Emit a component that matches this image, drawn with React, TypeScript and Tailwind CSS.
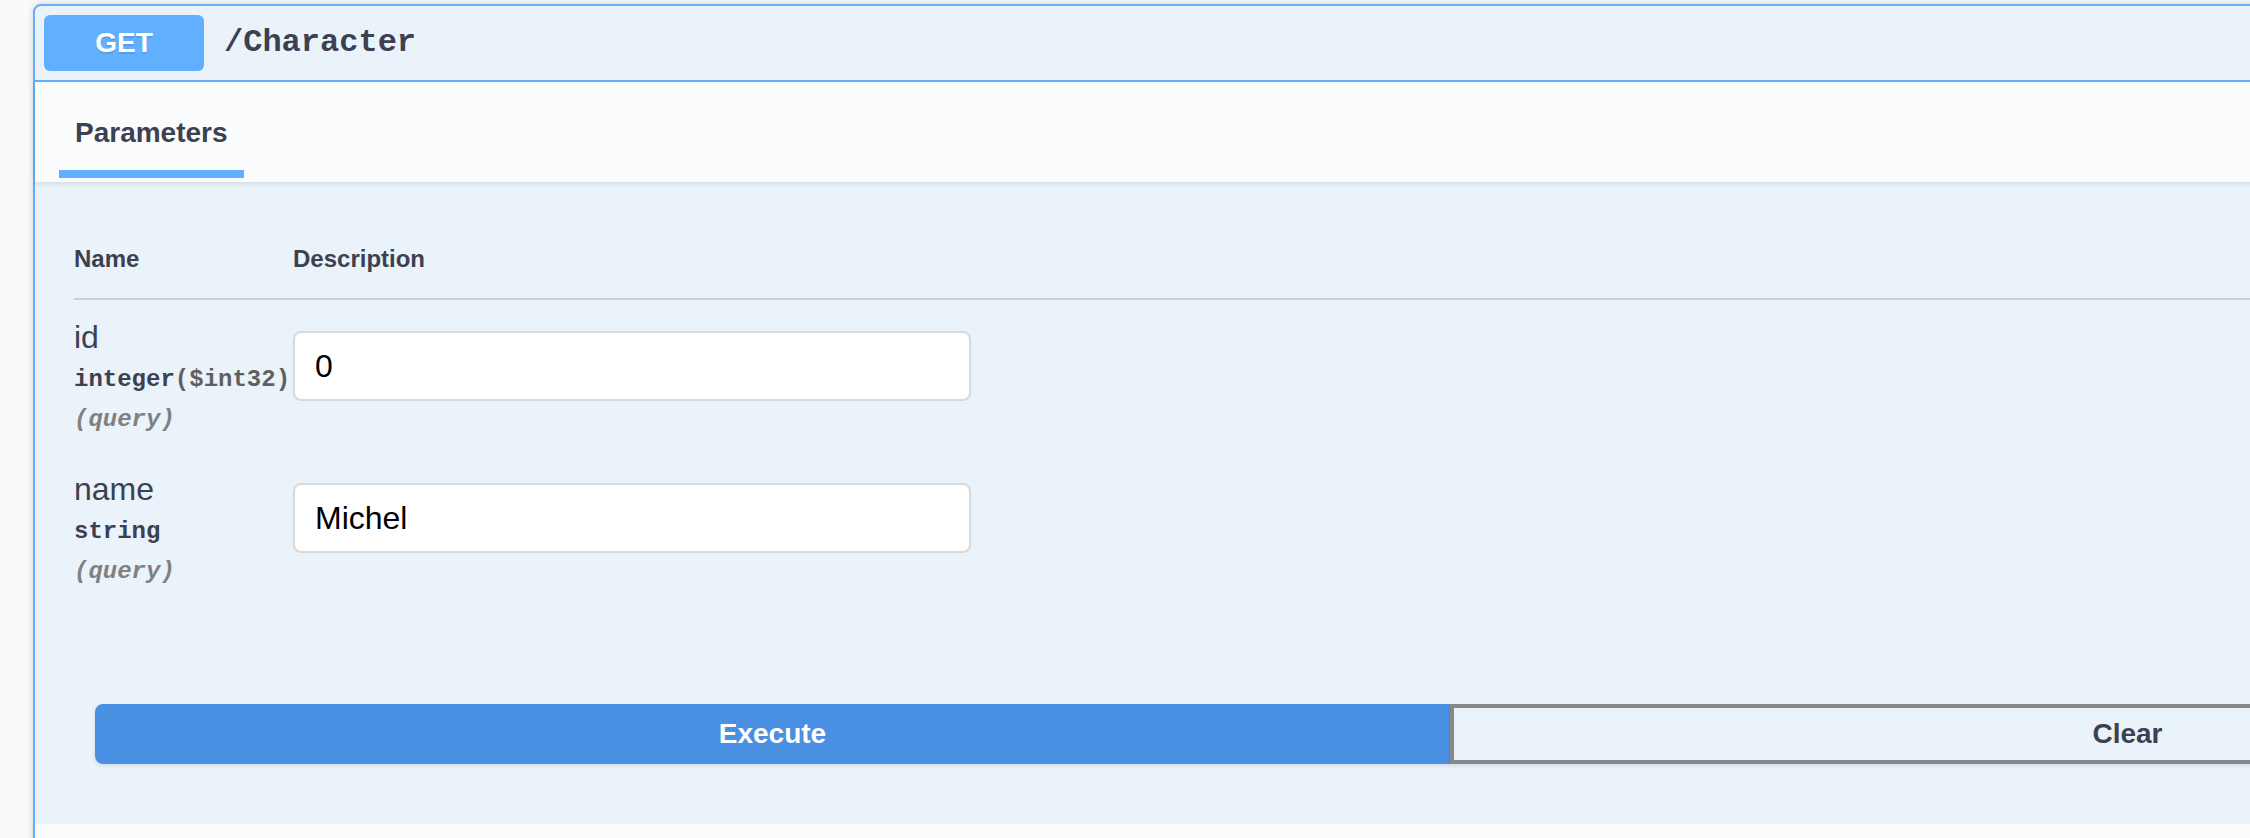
const sans = "font-['Liberation_Sans',Arial,sans-serif]";
const mono = "font-['Liberation_Mono','Courier_New',monospace]";

type Param = {
  name: string;
  type: string;
  format?: string;
  value: string;
};

const params: Param[] = [
  { name: "id", type: "integer", format: "($int32)", value: "0" },
  { name: "name", type: "string", value: "Michel" },
];

const ParamRow = ({ p }: { p: Param }) => (
  <div className="flex pt-[20px] pb-[18px]">
    <div className="w-[219px] shrink-0 flex flex-col">
      <div className={`${sans} text-[32px] leading-[34px] text-[#3b4151]`}>{p.name}</div>
      <div className={`${mono} mt-[12px] text-[24px] leading-[28px] font-bold text-[#3b4151]`}>
        {p.type}
        {p.format && <span className="text-[#606060]">{p.format}</span>}
      </div>
      <div className={`${mono} mt-[12px] text-[24px] leading-[28px] font-bold italic text-[#808080]`}>
        (query)
      </div>
    </div>
    <div className="pt-[11px]">
      <input
        readOnly
        value={p.value}
        className={`${sans} w-[678px] h-[70px] px-[20px] border-2 border-[#d9d9d9] rounded-[8px] bg-white text-[32px] text-black outline-none`}
      />
    </div>
  </div>
);

export default function App() {
  return (
    <div className={`${sans} w-full h-[838px] overflow-hidden bg-[#fafafa] pt-[4px]`}>
      <div className="ml-[33px] w-[2834px] border-2 border-[#61affe] rounded-[8px] bg-[#ebf3fa] shadow-[0_0_6px_rgba(0,0,0,0.19)]">
        {/* summary */}
        <div className="h-[76px] flex items-center px-[9px] border-b-2 border-[#61affe]">
          <div className="w-[160px] h-[56px] rounded-[6px] bg-[#61affe] flex items-center justify-center text-white font-bold text-[28px] [text-shadow:0_2px_0_rgba(0,0,0,0.1)]">
            GET
          </div>
          <span className={`${mono} ml-[20px] text-[32px] font-bold text-[#3b4151]`}>/Character</span>
        </div>

        {/* section header */}
        <div className="h-[100px] bg-[#fbfcfe] shadow-[0_2px_4px_rgba(0,0,0,0.1)] px-[40px] pt-[35px] relative">
          <div className="inline-flex flex-col">
            <span className="text-[28px] leading-[32px] font-bold text-[#3b4151]">Parameters</span>
            <div className="-mx-[16px] mt-[21px] h-[8px] bg-[#61affe]" />
          </div>
        </div>

        {/* parameters table */}
        <div className="pl-[39px] pt-[65px] pb-[40px]">
          <div className="flex pb-[27px] border-b-2 border-[#c8cfd8] text-[24px] leading-[24px] font-bold text-[#3b4151]">
            <div className="w-[219px]">Name</div>
            <div>Description</div>
          </div>
          {params.map((p) => (
            <ParamRow key={p.name} p={p} />
          ))}
        </div>

        {/* buttons */}
        <div className="flex px-[60px] py-[60px]">
          <button className="flex-1 h-[60px] bg-[#4990e2] border-4 border-[#4990e2] rounded-l-[8px] text-white font-bold text-[28px] shadow-[0_2px_4px_rgba(0,0,0,0.1)]">
            Execute
          </button>
          <button className="flex-1 h-[60px] bg-transparent border-4 border-[#888888] rounded-r-[8px] text-[#3b4151] font-bold text-[28px] shadow-[0_2px_4px_rgba(0,0,0,0.1)]">
            Clear
          </button>
        </div>

        <div className="h-[100px] bg-[#fbfcfe]" />
      </div>
    </div>
  );
}
